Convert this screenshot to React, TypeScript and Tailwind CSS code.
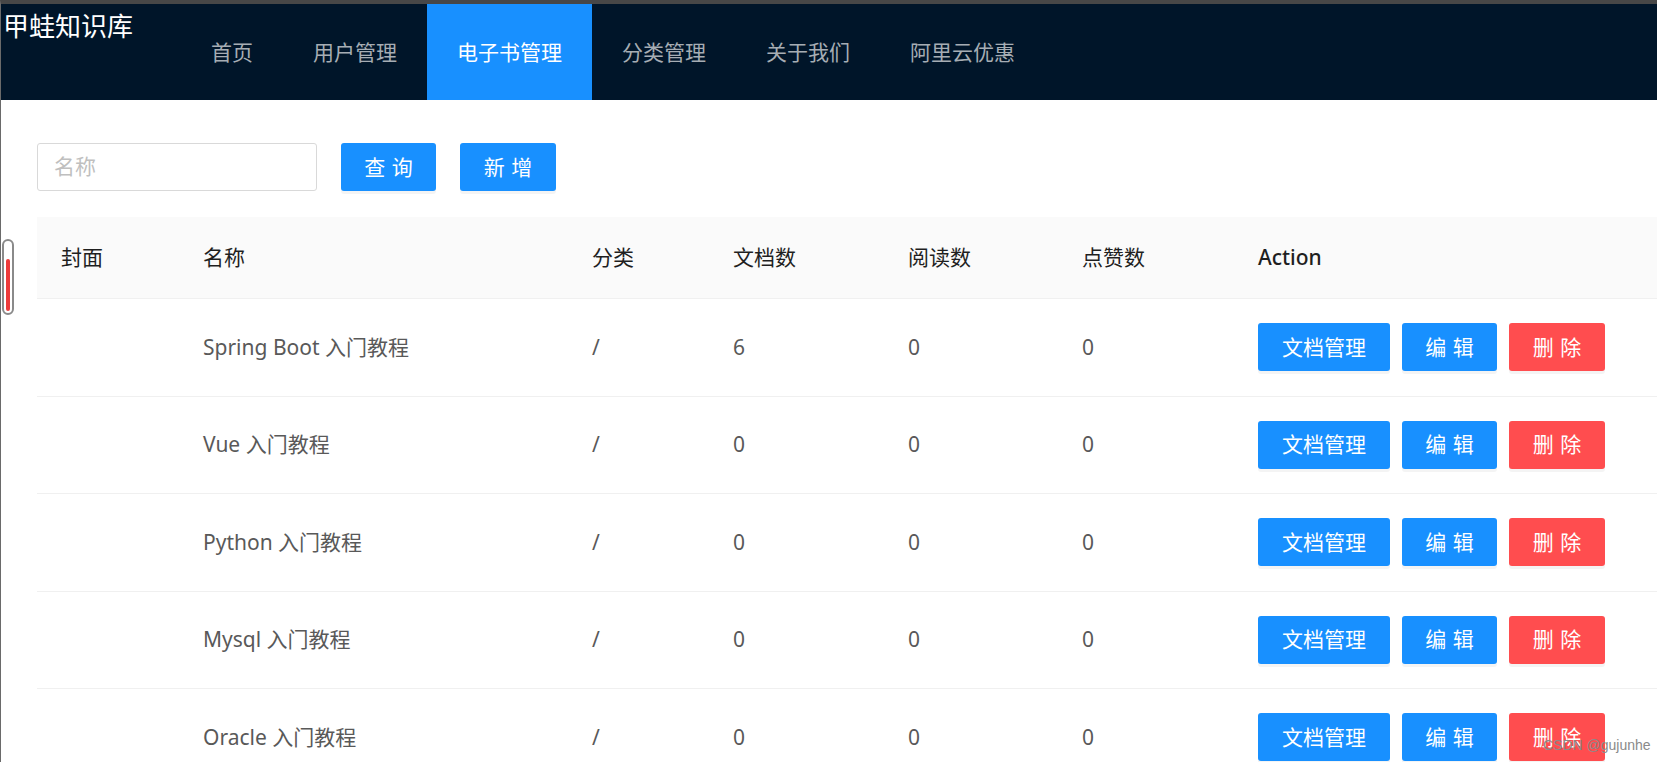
import React from 'react';

const menu = ['首页', '用户管理', '电子书管理', '分类管理', '关于我们', '阿里云优惠'];

const books = [
    { name: 'Spring Boot 入门教程', category: '/', docs: 6, views: 0, votes: 0 },
    { name: 'Vue 入门教程', category: '/', docs: 0, views: 0, votes: 0 },
    { name: 'Python 入门教程', category: '/', docs: 0, views: 0, votes: 0 },
    { name: 'Mysql 入门教程', category: '/', docs: 0, views: 0, votes: 0 },
    { name: 'Oracle 入门教程', category: '/', docs: 0, views: 0, votes: 0 },
];

const cols = 'grid grid-cols-[142px_389px_141px_175px_174px_176px_1fr]';

const Btn = ({ children, danger = false, w }: { children: React.ReactNode; danger?: boolean; w: string }) => (
    <button
        className={`${w} h-[48px] rounded-[3px] text-white text-[21px] leading-none shadow-[0_3px_0_rgba(0,0,0,0.045)] ${
            danger ? 'bg-[#ff4d4f]' : 'bg-[#1890ff]'
        }`}
    >
        {children}
    </button>
);

export default function App() {
    return (
        <div className="relative h-[762px] overflow-hidden bg-white border-t-4 border-t-[#474747] border-l border-l-[#6a6a6a] font-['Noto_Sans','Noto_Sans_CJK_SC',sans-serif]">
            {/* header */}
            <div className="flex h-[96px] bg-[#001529]">
                <div className="w-[180px] pl-[2px] pt-[5px] text-[26px] leading-[34px] text-white">甲蛙知识库</div>
                <div className="flex">
                    {menu.map((m) => (
                        <div
                            key={m}
                            className={`px-[30px] text-[21px] leading-[96px] ${
                                m === '电子书管理' ? 'bg-[#1890ff] text-white' : 'text-[#a6adb4]'
                            }`}
                        >
                            {m}
                        </div>
                    ))}
                </div>
            </div>

            {/* content */}
            <div className="pl-[36px] pt-[43px]">
                <div className="flex items-center gap-[24px]">
                    <div className="w-[280px] h-[48px] rounded-[3px] border border-[#d9d9d9] px-[16px] flex items-center text-[21px] text-[#bfbfbf]">
                        名称
                    </div>
                    <Btn w="w-[95px] tracking-[0.3em] pl-[0.3em]">查询</Btn>
                    <Btn w="w-[96px] tracking-[0.3em] pl-[0.3em]">新增</Btn>
                </div>

                <div className="mt-[26px]">
                    <div className={`${cols} h-[82px] items-center bg-[#fafafa] border-b border-[#f0f0f0] text-[21px] text-[#1f1f1f]`}>
                        {['封面', '名称', '分类', '文档数', '阅读数', '点赞数'].map((h) => (
                            <div key={h} className="px-[24px]">{h}</div>
                        ))}
                        <div className="px-[24px] font-medium">Action</div>
                    </div>
                    {books.map((b) => (
                        <div key={b.name} className={`${cols} h-[97.5px] items-center border-b border-[#f0f0f0] text-[21px] text-[#595959]`}>
                            <div className="px-[24px]" />
                            <div className="px-[24px]">{b.name}</div>
                            <div className="px-[24px]">{b.category}</div>
                            <div className="px-[24px]">{b.docs}</div>
                            <div className="px-[24px]">{b.views}</div>
                            <div className="px-[24px]">{b.votes}</div>
                            <div className="px-[24px] flex gap-[12px]">
                                <Btn w="w-[132px]">文档管理</Btn>
                                <Btn w="w-[95px] tracking-[0.3em] pl-[0.3em]">编辑</Btn>
                                <Btn danger w="w-[96px] tracking-[0.3em] pl-[0.3em]">删除</Btn>
                            </div>
                        </div>
                    ))}
                </div>
            </div>

            {/* side scroll widget */}
            <div className="absolute left-[1px] top-[235px] w-[12px] h-[76px] rounded-full border-2 border-[#8a8a8a] bg-white p-[2px] flex flex-col justify-end">
                <div className="h-[52px] w-full rounded-full bg-[#ee3b3b]" />
            </div>

            {/* watermark */}
            <div className="absolute left-[1542px] top-[734px] whitespace-nowrap text-[14px] leading-none text-[#8a8a8a] font-['Liberation_Sans',sans-serif]">
                CSDN @gujunhe
            </div>
        </div>
    );
}
